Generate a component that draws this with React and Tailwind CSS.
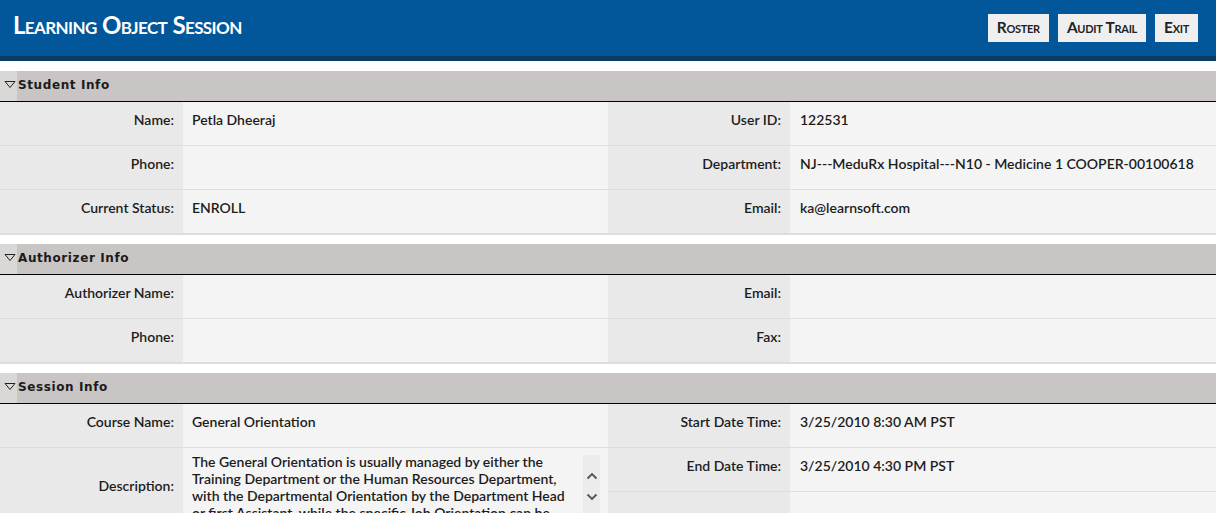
const Tri = () => (
  <svg width="12" height="9" viewBox="0 0 12 9" className="ml-[4px]">
    <polygon points="1,1.5 11,1.5 6,7.5" fill="none" stroke="#222" strokeWidth="1" />
  </svg>
);

const SectionHead = ({ title }) => (
  <div className="flex h-[31px] bg-[#c9c5c4] border-b-[1.5px] border-black">
    <div className="w-[17px] bg-[#dad8d7] flex items-center pb-[3px]">
      <Tri />
    </div>
    <div className="ml-[1px] flex items-center pb-[3px] font-['DejaVu_Sans',sans-serif] font-bold text-[12px] tracking-[0.6px] text-[#1b1b1b]">
      {title}
    </div>
  </div>
);

const Row = ({ label, value, last }) => (
  <div className={`flex h-[44px] ${last ? "" : "border-b border-[#dddddd]"}`}>
    <div className="w-[183px] shrink-0 bg-[#e9e9e9] text-right pr-[9px] pt-[7px]">{label}</div>
    <div className="flex-1 bg-[#f4f4f4] pl-[9px] pt-[7px]">{value}</div>
  </div>
);

const RowR = ({ label, value, last }) => (
  <div className={`flex h-[44px] ${last ? "" : "border-b border-[#dddddd]"}`}>
    <div className="w-[182px] shrink-0 bg-[#e9e9e9] text-right pr-[9px] pt-[7px]">{label}</div>
    <div className="flex-1 bg-[#f4f4f4] pl-[10px] pt-[7px]">{value}</div>
  </div>
);

const Chevron = ({ up }) => (
  <svg width="12" height="8" viewBox="0 0 12 8">
    <polyline
      points={up ? "1.5,6.5 6,2 10.5,6.5" : "1.5,1.5 6,6 10.5,1.5"}
      fill="none"
      stroke="#555"
      strokeWidth="1.8"
    />
  </svg>
);

export default function App() {
  return (
    <div className="min-h-screen bg-white font-['Lato',sans-serif] text-[14px] font-semibold text-[#1c1c1c]">
      {/* header */}
      <div className="h-[61px] bg-[#02579a] border-b-[5px] border-[#0b3c62] flex items-center justify-between pl-[13px] pr-[18px]">
        <h1 className="text-white text-[24px] font-bold [font-variant:small-caps] tracking-[-0.6px] -mt-[6px]">
          Learning Object Session
        </h1>
        <div className="flex gap-[9px] mt-[-1px]">
          {["Roster", "Audit Trail", "Exit"].map((b) => (
            <button
              key={b}
              className="h-[28px] px-[9px] bg-[#efefef] text-[#222] text-[15.5px] font-bold [font-variant:small-caps] tracking-[-0.3px]"
            >
              {b}
            </button>
          ))}
        </div>
      </div>

      <div className="h-[10px]" />
      <SectionHead title="Student Info" />
      <div className="grid grid-cols-[608px_1fr]">
        <div>
          <Row label="Name:" value="Petla Dheeraj" />
          <Row label="Phone:" value="" />
          <Row label="Current Status:" value="ENROLL" />
        </div>
        <div>
          <RowR label="User ID:" value="122531" />
          <RowR label="Department:" value="NJ---MeduRx Hospital---N10 - Medicine 1 COOPER-00100618" />
          <RowR label="Email:" value="ka@learnsoft.com" />
        </div>
      </div>

      <div className="h-[10px] border-t border-[#dddddd]" />
      <SectionHead title="Authorizer Info" />
      <div className="grid grid-cols-[608px_1fr]">
        <div>
          <Row label="Authorizer Name:" value="" />
          <Row label="Phone:" value="" />
        </div>
        <div>
          <RowR label="Email:" value="" />
          <RowR label="Fax:" value="" />
        </div>
      </div>

      <div className="h-[10px] border-t border-[#dddddd]" />
      <SectionHead title="Session Info" />
      <div className="grid grid-cols-[608px_1fr]">
        <div>
          <Row label="Course Name:" value="General Orientation" />
          <div className="flex h-[80px]">
            <div className="w-[183px] shrink-0 bg-[#e9e9e9] text-right pr-[9px] flex items-center justify-end pb-[6px]">
              Description:
            </div>
            <div className="flex-1 bg-[#f4f4f4] pl-[9px] pt-[5px] flex">
              <div className="w-[385px] h-[70px] overflow-hidden leading-[17px]">
                The General Orientation is usually managed by either the Training Department or the Human
                Resources Department, with the Departmental Orientation by the Department Head or first
                Assistant, while the specific Job Orientation can be conducted by the supervisor.
              </div>
              <div className="ml-[6px] mt-[2px] w-[17px] h-[70px] bg-[#ececec] flex flex-col items-center pt-[17px] gap-[13px]">
                <Chevron up />
                <Chevron />
              </div>
            </div>
          </div>
        </div>
        <div>
          <RowR label="Start Date Time:" value="3/25/2010 8:30 AM PST" />
          <RowR label="End Date Time:" value="3/25/2010 4:30 PM PST" />
          <RowR label="" value="" />
        </div>
      </div>
    </div>
  );
}
